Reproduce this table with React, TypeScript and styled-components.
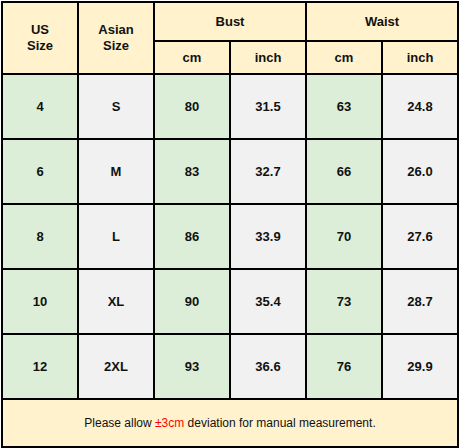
import React from 'react';
import styled, { createGlobalStyle } from 'styled-components';

const GlobalStyle = createGlobalStyle`
  body {
    margin: 0;
    background: #FFFFFF;
    font-family: "Liberation Sans", Arial, sans-serif;
  }
`;

type Row = { us: string; asian: string; bustCm: string; bustIn: string; waistCm: string; waistIn: string };

const rows: Row[] = [
  { us: '4', asian: 'S', bustCm: '80', bustIn: '31.5', waistCm: '63', waistIn: '24.8' },
  { us: '6', asian: 'M', bustCm: '83', bustIn: '32.7', waistCm: '66', waistIn: '26.0' },
  { us: '8', asian: 'L', bustCm: '86', bustIn: '33.9', waistCm: '70', waistIn: '27.6' },
  { us: '10', asian: 'XL', bustCm: '90', bustIn: '35.4', waistCm: '73', waistIn: '28.7' },
  { us: '12', asian: '2XL', bustCm: '93', bustIn: '36.6', waistCm: '76', waistIn: '29.9' },
];

const App: React.FC = () => {
  return (
    <>
      <GlobalStyle />
      <Wrapper>
        <Table>
          <colgroup>
            {Array.from({ length: 6 }).map((_, i) => (
              <col key={i} style={{ width: 76 }} />
            ))}
          </colgroup>
          <thead>
            <tr>
              <HeadCell rowSpan={2}>
                US
                <br />
                Size
              </HeadCell>
              <HeadCell rowSpan={2}>
                Asian
                <br />
                Size
              </HeadCell>
              <HeadCell colSpan={2} $top>Bust</HeadCell>
              <HeadCell colSpan={2} $top>Waist</HeadCell>
            </tr>
            <tr>
              <HeadCell>cm</HeadCell>
              <HeadCell>inch</HeadCell>
              <HeadCell>cm</HeadCell>
              <HeadCell>inch</HeadCell>
            </tr>
          </thead>
          <tbody>
            {rows.map((r) => (
              <tr key={r.us}>
                <Cell $tone="green">{r.us}</Cell>
                <Cell $tone="gray">{r.asian}</Cell>
                <Cell $tone="green">{r.bustCm}</Cell>
                <Cell $tone="gray">{r.bustIn}</Cell>
                <Cell $tone="green">{r.waistCm}</Cell>
                <Cell $tone="gray">{r.waistIn}</Cell>
              </tr>
            ))}
            <tr>
              <NoteCell colSpan={6}>
                Please allow <Red>±3cm</Red> deviation for manual measurement.
              </NoteCell>
            </tr>
          </tbody>
        </Table>
      </Wrapper>
    </>
  );
};

export default App;

const Wrapper = styled.div`
  padding: 1px 0 0 1px;
`;

const Table = styled.table`
  border-collapse: collapse;
  table-layout: fixed;
  width: 457px;
  font-size: 13px;
  color: #111111;
`;

const HeadCell = styled.th<{ $top?: boolean }>`
  border: 2px solid #000000;
  background: #FFF2CC;
  font-weight: 700;
  text-align: center;
  vertical-align: middle;
  padding: 0;
  line-height: 16px;
  height: ${({ $top }) => ($top ? '37px' : '31px')};
`;

const Cell = styled.td<{ $tone: 'green' | 'gray' }>`
  border: 2px solid #000000;
  background: ${({ $tone }) => ($tone === 'green' ? '#DCEED7' : '#F1F1F1')};
  font-weight: 700;
  text-align: center;
  vertical-align: middle;
  padding: 0;
  height: 63px;
`;

const NoteCell = styled.td`
  border: 2px solid #000000;
  background: #FFF2CC;
  text-align: center;
  vertical-align: middle;
  padding: 0;
  height: 46px;
  font-size: 12px;
  font-weight: 400;
`;

const Red = styled.span`
  color: #FF0000;
`;
